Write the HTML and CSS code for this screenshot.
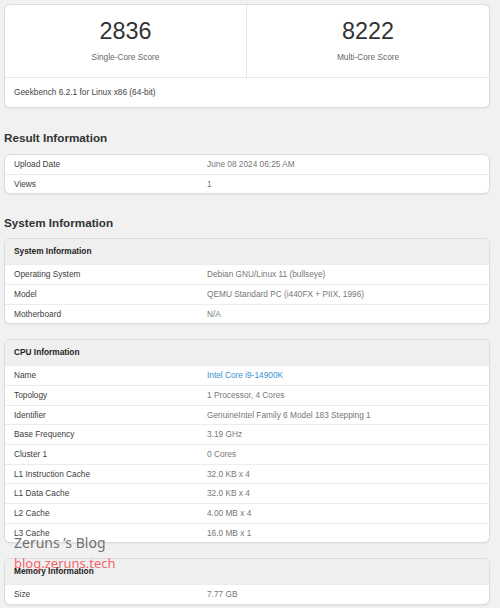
FILE: index.html
```html
<!DOCTYPE html>
<html>
<head>
<meta charset="utf-8">
<link rel="stylesheet" href="styles.css">
</head>
<body>
<div class="page">
  <div class="card score-card">
    <div class="scores">
      <div class="score">
        <div class="score-num">2836</div>
        <div class="score-label">Single-Core Score</div>
      </div>
      <div class="score">
        <div class="score-num">8222</div>
        <div class="score-label">Multi-Core Score</div>
      </div>
    </div>
    <div class="score-footer">Geekbench 6.2.1 for Linux x86 (64-bit)</div>
  </div>

  <h2 class="section-title">Result Information</h2>
  <div class="card">
    <div class="row first"><div class="k">Upload Date</div><div class="v">June 08 2024 06:25 AM</div></div>
    <div class="row"><div class="k">Views</div><div class="v">1</div></div>
  </div>

  <h2 class="section-title second">System Information</h2>
  <div class="card">
    <div class="card-head">System Information</div>
    <div class="row"><div class="k">Operating System</div><div class="v">Debian GNU/Linux 11 (bullseye)</div></div>
    <div class="row"><div class="k">Model</div><div class="v">QEMU Standard PC (i440FX + PIIX, 1996)</div></div>
    <div class="row"><div class="k">Motherboard</div><div class="v">N/A</div></div>
  </div>

  <div class="card gap">
    <div class="card-head">CPU Information</div>
    <div class="row"><div class="k">Name</div><div class="v link">Intel Core i9-14900K</div></div>
    <div class="row"><div class="k">Topology</div><div class="v">1 Processor, 4 Cores</div></div>
    <div class="row"><div class="k">Identifier</div><div class="v">GenuineIntel Family 6 Model 183 Stepping 1</div></div>
    <div class="row"><div class="k">Base Frequency</div><div class="v">3.19 GHz</div></div>
    <div class="row"><div class="k">Cluster 1</div><div class="v">0 Cores</div></div>
    <div class="row"><div class="k">L1 Instruction Cache</div><div class="v">32.0 KB x 4</div></div>
    <div class="row"><div class="k">L1 Data Cache</div><div class="v">32.0 KB x 4</div></div>
    <div class="row"><div class="k">L2 Cache</div><div class="v">4.00 MB x 4</div></div>
    <div class="row"><div class="k">L3 Cache</div><div class="v">16.0 MB x 1</div></div>
  </div>

  <div class="card gap">
    <div class="card-head">Memory Information</div>
    <div class="row"><div class="k">Size</div><div class="v">7.77 GB</div></div>
  </div>

  <div class="watermark">
    <div class="wm-title">Zeruns ’s Blog</div>
    <div class="wm-url">blog.zeruns.tech</div>
  </div>
</div>
</body>
</html>
```

FILE: styles.css
```css
* { box-sizing: border-box; }
html, body { margin: 0; padding: 0; }
body {
  background: #f1f1f1;
  font-family: "Liberation Sans", Arial, sans-serif;
  color: #333;
  width: 500px;
  height: 608px;
  overflow: hidden;
}
.page {
  position: relative;
  padding: 4px 10px 0 4px;
}
.card {
  background: #fff;
  border: 1px solid #dcdcdc;
  border-radius: 6px;
  box-shadow: 0 1px 2px rgba(0,0,0,0.06);
  overflow: hidden;
}
.card.gap { margin-top: 15px; }
.scores {
  display: grid;
  grid-template-columns: 1fr 1fr;
  height: 72px;
}
.score {
  text-align: center;
  padding-top: 11px;
}
.score:first-child { border-right: 1px solid #e6e6e6; }
.score-num {
  font-size: 23.4px;
  line-height: 30px;
  color: #333;
}
.score-label {
  font-size: 8.3px;
  line-height: 12px;
  margin-top: 5px;
  color: #666;
}
.score-footer {
  border-top: 1px solid #e6e6e6;
  height: 30px;
  line-height: 29px;
  padding-left: 9px;
  font-size: 8.3px;
  color: #444;
}
.section-title {
  margin: 22px 0 8px 0;
  font-size: 11.7px;
  line-height: 16px;
  font-weight: bold;
  color: #333;
}
.section-title.second { margin: 20.5px 0 7.5px 0; }
.card-head {
  background: #efefef;
  height: 25px;
  line-height: 25px;
  padding-left: 9px;
  font-size: 8.3px;
  font-weight: bold;
  color: #222;
}
.row {
  display: grid;
  grid-template-columns: 194px 1fr;
  height: 19.67px;
  line-height: 18.67px;
  border-top: 1px solid #ececec;
  font-size: 8.3px;
}
.row.first { border-top: none; height: 18.67px; }
.k { padding-left: 9px; color: #3d3d3d; }
.v { padding-left: 8px; color: #777; }
.v.link { color: #3a8fd0; }
.watermark {
  position: absolute;
  left: 14px;
  top: 533px;
  pointer-events: none;
}
.wm-title {
  font-family: "Noto Sans", "Open Sans", sans-serif;
  font-size: 14px;
  line-height: 19px;
  color: rgba(95,95,95,0.9);
}
.wm-url {
  font-family: "Noto Sans", "Open Sans", sans-serif;
  font-size: 13px;
  line-height: 19px;
  margin-top: 2px;
  color: rgba(245,80,90,0.9);
}
```
